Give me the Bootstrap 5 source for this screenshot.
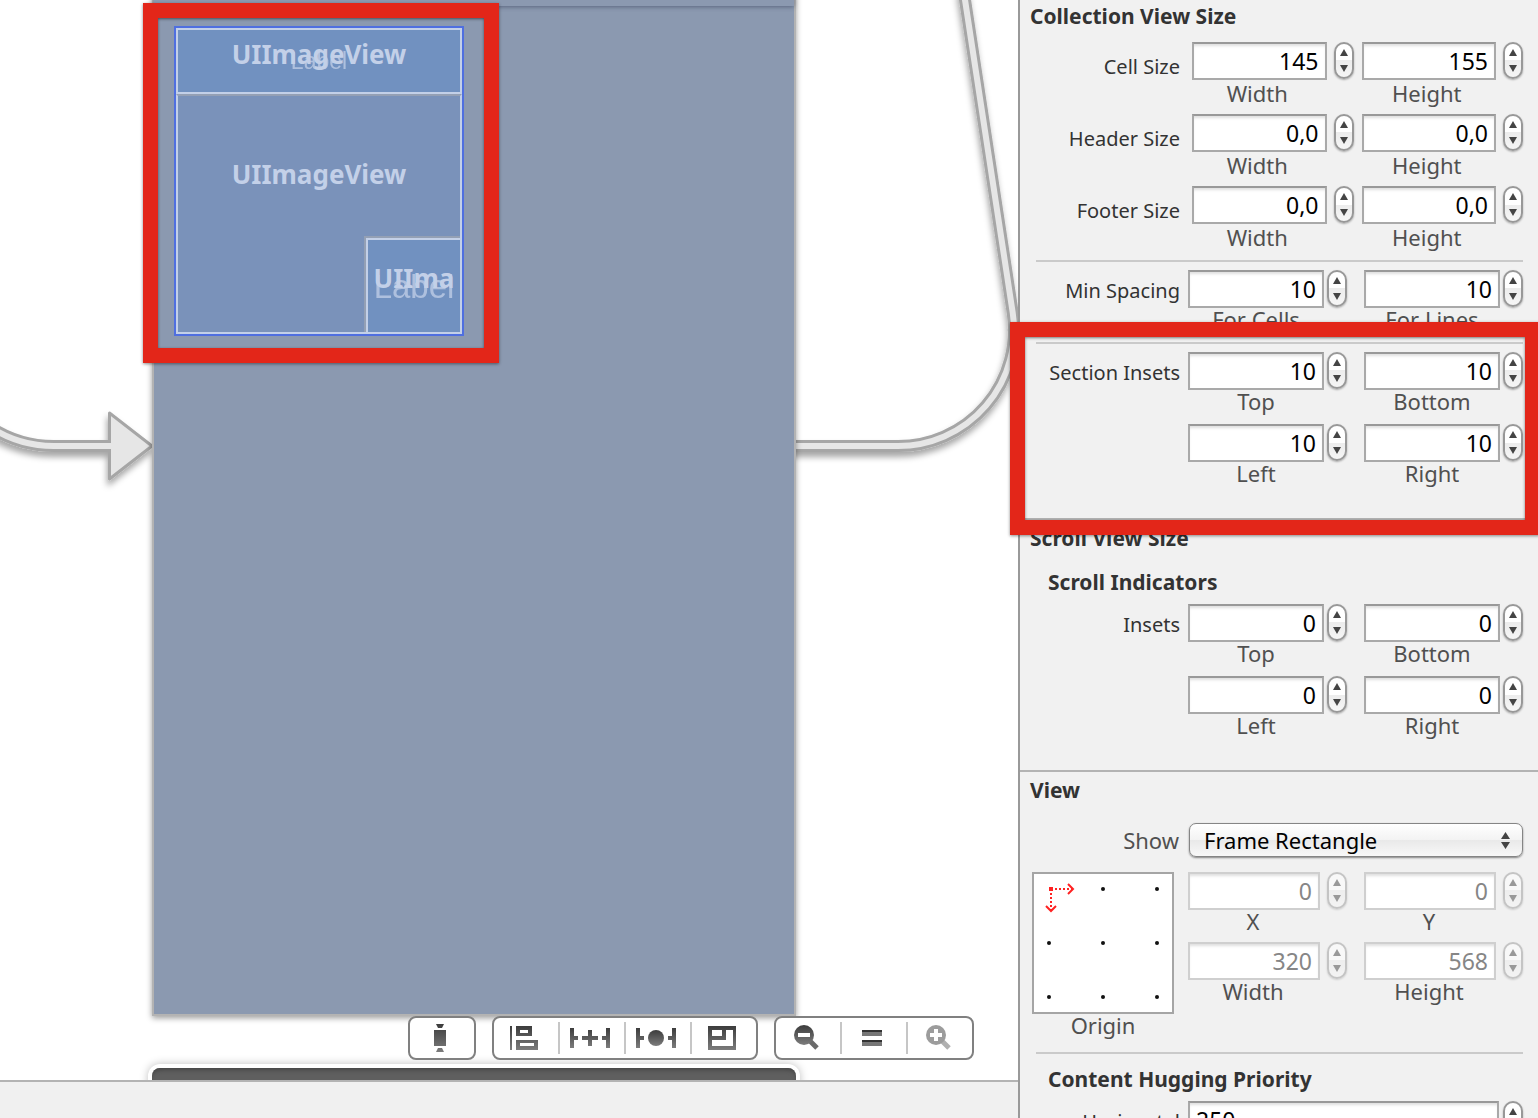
<!DOCTYPE html>
<html lang="en">
<head>
<meta charset="utf-8">
<meta name="viewport" content="width=device-width, initial-scale=1">
<title>Storyboard – Collection View Size</title>
<link href="https://cdn.jsdelivr.net/npm/bootstrap@5.3.0/dist/css/bootstrap.min.css" rel="stylesheet">
<style>
body{font-family:"Noto Sans","Open Sans",sans-serif;font-size:22px;line-height:22px;color:#333;background:#fff}
/* canvas */
.stage{background:#fff;min-width:0}
.wires{left:0;top:0;pointer-events:none}
.scene{left:152px;top:-8px;bottom:64px;width:644px;background:#8b99b0;border:2px solid #b3b3b3;box-shadow:0 2px 6px rgba(0,0,0,.4)}
.scene-bar{height:12px;box-shadow:0 1px 4px rgba(50,60,85,.55)}
.next-scene{left:152px;bottom:-30px;width:644px;height:42px;background:#5f5f5f;border-radius:8px;box-shadow:inset 0 4px 4px -2px #444,0 0 0 4px #fff,0 0 8px 4px rgba(0,0,0,.25)}
.red-frame{border:15px solid #e32619;box-shadow:0 1px 3px rgba(0,0,0,.45),inset 0 1px 3px rgba(0,0,0,.5);pointer-events:none}
.frame-cell{left:143px;top:3px;width:356px;height:360px}
.cell-box{left:174px;top:26px;width:290px;height:310px;border:2px solid #4f6fe0;background:#7a92ba}
.img-view{border:2px solid #c3d0e8;color:#c3d0e8;font-weight:700;font-size:26px;line-height:36px;overflow:hidden}
.img-head{height:66px;background:#7191c0;padding-top:6px}
.img-body{border-top:2px solid #94a0b5;padding-top:60px}
.img-badge{right:0;bottom:0;width:96px;height:96px;background:#7191c0;box-shadow:-2px -2px 0 #94a0b5;padding-top:20px}
.ghost{left:0;right:0;font-family:"Liberation Sans",Arial,sans-serif;font-weight:400;opacity:.75;text-align:center}
.ghost-s{top:13px;font-size:23px}
.ghost-l{top:29px;font-size:33px}
/* floating tool bar */
.tools{right:44px;bottom:20px;gap:16px}
.tool-group{border:2px solid #808080;border-radius:8px;background:#fff}
.tool{width:64px;height:40px;border:0;padding:0;background:none;display:block}
.split{width:2px;height:32px;background:#c6c6c6}
.foot{height:38px;background:#f0f0f0;border-top:2px solid #b3b3b3}
/* inspector */
.inspector{width:520px;background:#f1f1f1;border-left:2px solid #999}
.panel{padding:5px 15px 22px 0;border-bottom:2px solid #b3b3b3}
.panel-first{margin-top:-2px}
.head{font-size:21px;line-height:26px;font-weight:700;margin:0 0 18px;padding-left:10px}
.subhead{padding-left:28px;margin-bottom:9px}
.panel-first .head{margin-bottom:13px}
.rule{height:2px;margin:0 0 8px 16px;background:#cacaca}
.rule-first{margin-top:2px}
.tag{flex:none;width:160px;text-align:right;font-size:20px;line-height:38px;padding-top:2px}
.line{gap:8px;height:72px}
.pairs{flex:1 1 0;min-width:0;gap:17px}
.wide{gap:12px}
.wide .tag{padding-top:6px}
.wide .pairs{gap:8px}
.off{height:70px}
.cellf{flex:1 1 0;min-width:0}
.ctl{gap:3px}
.wide .ctl,.off .ctl{gap:7px}
.num{flex:1 1 0;min-width:0;height:38px;border:2px solid #a9a9a9;border-top-color:#999;border-radius:0;background:#fff;color:#000;text-align:right;font-size:23px;line-height:30px;padding:2px 6px;box-shadow:inset 0 3px 3px -1px rgba(0,0,0,.13)}
.num:disabled{border-color:#cfcfcf;color:#868686}
.cap{display:block;text-align:center;color:#505050;margin-right:23px}
.wide .cap{margin-top:2px;margin-right:31px}
.off .cap{margin-right:29px}
.spin{flex:none;width:20px;height:37px;border:2px solid #989898;border-radius:10px;background:linear-gradient(#fff 50%,#ececec 50%,#f6f6f6);box-shadow:0 1px 2px rgba(0,0,0,.3);overflow:hidden}
.spin button{flex:1;border:0;padding:0;background:none;line-height:0}
.off .spin{opacity:.5}
.show-tag{width:159px;text-align:right;color:#505050}
.popup{height:34px;width:100%;border:1px solid #858585;border-radius:7px;background:linear-gradient(#fff,#f3f3f3 50%,#e9e9e9 51%,#f8f8f8);box-shadow:0 1px 2px rgba(0,0,0,.45);appearance:none;color:#000;font-size:22px;line-height:30px;padding:0 14px}
.popup-mark{right:13px;top:9px;pointer-events:none}
.show-row{gap:10px;margin:20px 0 15px}
.origin{width:142px;margin:0 14px 0 12px}
.origin-box{height:142px;background:#fff;border:2px solid #a5a5a5}
.frame-insets{left:-10px;right:-2px;top:322px;height:213px}
</style>
<script src="https://cdn.jsdelivr.net/npm/bootstrap@5.3.0/dist/js/bootstrap.bundle.min.js"></script>
</head>
<body>
<svg width="0" height="0" class="position-absolute" aria-hidden="true">
<defs>
<linearGradient id="ink" x1="0" y1="0" x2="0" y2="1"><stop offset="0" stop-color="#3c3c3c"/><stop offset="1" stop-color="#7c7c7c"/></linearGradient>
<symbol id="up" viewBox="0 0 8 7"><path d="M4 0 8 7H0z" fill="#444"/></symbol>
<symbol id="down" viewBox="0 0 8 7"><path d="M0 0H8L4 7z" fill="#444"/></symbol>
</defs>
</svg>
<div class="d-flex vh-100 overflow-hidden">
<main class="d-flex flex-column flex-grow-1 stage">
  <div class="position-relative flex-grow-1 overflow-hidden">
    <svg class="wires position-absolute" width="1018" height="1080" aria-hidden="true">
      <defs><filter id="sh" x="-10%" y="-10%" width="120%" height="130%"><feDropShadow dx="-1" dy="5" stdDeviation="3" flood-opacity=".35"/></filter></defs>
      <g filter="url(#sh)" fill="none">
        <path d="M-10 427C10 440 30 446 54 446H112" stroke="#a6a6a6" stroke-width="12"/>
        <path d="M109.500 413 152 446 109.500 479z" fill="#e6e6e6" stroke="#a6a6a6" stroke-width="3" stroke-linejoin="round"/>
        <path d="M-10 427C10 440 30 446 54 446H112" stroke="#e6e6e6" stroke-width="6"/>
      </g>
      <g filter="url(#sh)" fill="none">
        <path d="M790 446H898A116 116 0 0 0 1012.700 312.600L963.500 -10" stroke="#a6a6a6" stroke-width="12"/>
        <path d="M790 446H898A116 116 0 0 0 1012.700 312.600L963.500 -10" stroke="#e6e6e6" stroke-width="6"/>
      </g>
    </svg>
    <div class="scene position-absolute"><div class="scene-bar"></div></div>
    <div class="next-scene position-absolute"></div>
    <div class="cell-box position-absolute d-flex flex-column">
      <div class="img-view img-head position-relative text-center"><span class="ghost ghost-s position-absolute">Label</span>UIImageView</div>
      <div class="img-view img-body flex-grow-1 text-center">UIImageView</div>
      <div class="img-view img-badge position-absolute text-center"><span class="ghost ghost-l position-absolute">Label</span>UIIma</div>
    </div>
    <div class="red-frame frame-cell position-absolute"></div>
    <div class="tools position-absolute d-flex">
      <div class="tool-group d-flex align-items-center">
        <button class="tool" type="button" aria-label="Form factor"><svg width="64" height="40" fill="url(#ink)"><path d="M26 6h8l-2 4h-4zM24 12h12v16H24zM28 30h4l2 4h-8z"/></svg></button>
      </div>
      <div class="tool-group d-flex align-items-center">
        <button class="tool" type="button" aria-label="Align"><svg width="64" height="40" fill="url(#ink)"><path fill-rule="evenodd" d="M16 8h2v24h-2zM22 8h16v10H22zM26 12v3h8v-3zM22 22h22v10H22zM26 25v3h14v-3z"/></svg></button>
        <span class="split"></span>
        <button class="tool" type="button" aria-label="Pin"><svg width="64" height="40" fill="url(#ink)"><path d="M10 10h4v8h4v4h-4v8h-4zM28 12h4v6h6v4h-6v6h-4v-6h-6v-4h6zM50 10v20h-4v-8h-4v-4h4v-8z"/></svg></button>
        <span class="split"></span>
        <button class="tool" type="button" aria-label="Resolve issues"><svg width="64" height="40" fill="url(#ink)"><path d="M10 10h4v8h4v4h-4v8h-4zM50 10v20h-4v-8h-4v-4h4v-8z"/><circle cx="30" cy="20" r="8"/></svg></button>
        <span class="split"></span>
        <button class="tool" type="button" aria-label="Resizing behavior"><svg width="64" height="40" fill="url(#ink)"><path fill-rule="evenodd" d="M16 8h28v24H16zM20 12v6h10v-6zM34 12v10H20v6h21V12z"/></svg></button>
      </div>
      <div class="tool-group d-flex align-items-center">
        <button class="tool" type="button" aria-label="Zoom out"><svg width="64" height="40"><path d="M34 23 41 30" stroke="#6a6a6a" stroke-width="5"/><circle cx="28" cy="17" r="10" fill="url(#ink)"/><path d="M22 15h12v4H22z" fill="#fff"/></svg></button>
        <span class="split"></span>
        <button class="tool" type="button" aria-label="Actual size"><svg width="64" height="40"><path d="M20 12h20v6H20zM20 22h20v6H20z" fill="#777"/><path d="M20 12h20v2H20zM20 22h20v2H20z" fill="#333"/></svg></button>
        <span class="split"></span>
        <button class="tool" type="button" aria-label="Zoom in"><svg width="64" height="40"><path d="M34 23 41 30" stroke="#b0b0b0" stroke-width="5"/><circle cx="28" cy="17" r="10" fill="#9c9c9c"/><path d="M26 11h4v4h4v4h-4v4h-4v-4h-4v-4h4z" fill="#fff"/></svg></button>
      </div>
    </div>
  </div>
  <div class="foot flex-shrink-0"></div>
</main>

<aside class="inspector flex-shrink-0 position-relative">
  <section class="panel panel-first">
    <h2 class="head">Collection View Size</h2>
    <div class="line wide d-flex" role="group" aria-label="Cell Size"><span class="tag">Cell Size</span>
      <div class="pairs d-flex">
        <div class="cellf"><div class="ctl d-flex"><input class="num" id="cw" value="145"><span class="spin d-flex flex-column"><button type="button" aria-label="Increase"><svg width="8" height="7"><use href="#up"/></svg></button><button type="button" aria-label="Decrease"><svg width="8" height="7"><use href="#down"/></svg></button></span></div><label class="cap" for="cw">Width</label></div>
        <div class="cellf"><div class="ctl d-flex"><input class="num" id="ch" value="155"><span class="spin d-flex flex-column"><button type="button" aria-label="Increase"><svg width="8" height="7"><use href="#up"/></svg></button><button type="button" aria-label="Decrease"><svg width="8" height="7"><use href="#down"/></svg></button></span></div><label class="cap" for="ch">Height</label></div>
      </div></div>
    <div class="line wide d-flex" role="group" aria-label="Header Size"><span class="tag">Header Size</span>
      <div class="pairs d-flex">
        <div class="cellf"><div class="ctl d-flex"><input class="num" id="hw" value="0,0"><span class="spin d-flex flex-column"><button type="button" aria-label="Increase"><svg width="8" height="7"><use href="#up"/></svg></button><button type="button" aria-label="Decrease"><svg width="8" height="7"><use href="#down"/></svg></button></span></div><label class="cap" for="hw">Width</label></div>
        <div class="cellf"><div class="ctl d-flex"><input class="num" id="hh" value="0,0"><span class="spin d-flex flex-column"><button type="button" aria-label="Increase"><svg width="8" height="7"><use href="#up"/></svg></button><button type="button" aria-label="Decrease"><svg width="8" height="7"><use href="#down"/></svg></button></span></div><label class="cap" for="hh">Height</label></div>
      </div></div>
    <div class="line wide d-flex" role="group" aria-label="Footer Size"><span class="tag">Footer Size</span>
      <div class="pairs d-flex">
        <div class="cellf"><div class="ctl d-flex"><input class="num" id="fw" value="0,0"><span class="spin d-flex flex-column"><button type="button" aria-label="Increase"><svg width="8" height="7"><use href="#up"/></svg></button><button type="button" aria-label="Decrease"><svg width="8" height="7"><use href="#down"/></svg></button></span></div><label class="cap" for="fw">Width</label></div>
        <div class="cellf"><div class="ctl d-flex"><input class="num" id="fh" value="0,0"><span class="spin d-flex flex-column"><button type="button" aria-label="Increase"><svg width="8" height="7"><use href="#up"/></svg></button><button type="button" aria-label="Decrease"><svg width="8" height="7"><use href="#down"/></svg></button></span></div><label class="cap" for="fh">Height</label></div>
      </div></div>
    <div class="rule rule-first"></div>
    <div class="line d-flex" role="group" aria-label="Min Spacing"><span class="tag">Min Spacing</span>
      <div class="pairs d-flex">
        <div class="cellf"><div class="ctl d-flex"><input class="num" id="mc" value="10"><span class="spin d-flex flex-column"><button type="button" aria-label="Increase"><svg width="8" height="7"><use href="#up"/></svg></button><button type="button" aria-label="Decrease"><svg width="8" height="7"><use href="#down"/></svg></button></span></div><label class="cap" for="mc">For Cells</label></div>
        <div class="cellf"><div class="ctl d-flex"><input class="num" id="ml" value="10"><span class="spin d-flex flex-column"><button type="button" aria-label="Increase"><svg width="8" height="7"><use href="#up"/></svg></button><button type="button" aria-label="Decrease"><svg width="8" height="7"><use href="#down"/></svg></button></span></div><label class="cap" for="ml">For Lines</label></div>
      </div></div>
    <div class="rule"></div>
    <div class="line d-flex" role="group" aria-label="Section Insets"><span class="tag">Section Insets</span>
      <div class="pairs d-flex">
        <div class="cellf"><div class="ctl d-flex"><input class="num" id="st" value="10"><span class="spin d-flex flex-column"><button type="button" aria-label="Increase"><svg width="8" height="7"><use href="#up"/></svg></button><button type="button" aria-label="Decrease"><svg width="8" height="7"><use href="#down"/></svg></button></span></div><label class="cap" for="st">Top</label></div>
        <div class="cellf"><div class="ctl d-flex"><input class="num" id="sb" value="10"><span class="spin d-flex flex-column"><button type="button" aria-label="Increase"><svg width="8" height="7"><use href="#up"/></svg></button><button type="button" aria-label="Decrease"><svg width="8" height="7"><use href="#down"/></svg></button></span></div><label class="cap" for="sb">Bottom</label></div>
      </div></div>
    <div class="line d-flex"><span class="tag"></span>
      <div class="pairs d-flex">
        <div class="cellf"><div class="ctl d-flex"><input class="num" id="sl" value="10"><span class="spin d-flex flex-column"><button type="button" aria-label="Increase"><svg width="8" height="7"><use href="#up"/></svg></button><button type="button" aria-label="Decrease"><svg width="8" height="7"><use href="#down"/></svg></button></span></div><label class="cap" for="sl">Left</label></div>
        <div class="cellf"><div class="ctl d-flex"><input class="num" id="sr" value="10"><span class="spin d-flex flex-column"><button type="button" aria-label="Increase"><svg width="8" height="7"><use href="#up"/></svg></button><button type="button" aria-label="Decrease"><svg width="8" height="7"><use href="#down"/></svg></button></span></div><label class="cap" for="sr">Right</label></div>
      </div></div>
  </section>

  <section class="panel">
    <h2 class="head">Scroll View Size</h2>
    <h3 class="head subhead">Scroll Indicators</h3>
    <div class="line d-flex" role="group" aria-label="Insets"><span class="tag">Insets</span>
      <div class="pairs d-flex">
        <div class="cellf"><div class="ctl d-flex"><input class="num" id="it" value="0"><span class="spin d-flex flex-column"><button type="button" aria-label="Increase"><svg width="8" height="7"><use href="#up"/></svg></button><button type="button" aria-label="Decrease"><svg width="8" height="7"><use href="#down"/></svg></button></span></div><label class="cap" for="it">Top</label></div>
        <div class="cellf"><div class="ctl d-flex"><input class="num" id="ib" value="0"><span class="spin d-flex flex-column"><button type="button" aria-label="Increase"><svg width="8" height="7"><use href="#up"/></svg></button><button type="button" aria-label="Decrease"><svg width="8" height="7"><use href="#down"/></svg></button></span></div><label class="cap" for="ib">Bottom</label></div>
      </div></div>
    <div class="line d-flex"><span class="tag"></span>
      <div class="pairs d-flex">
        <div class="cellf"><div class="ctl d-flex"><input class="num" id="il" value="0"><span class="spin d-flex flex-column"><button type="button" aria-label="Increase"><svg width="8" height="7"><use href="#up"/></svg></button><button type="button" aria-label="Decrease"><svg width="8" height="7"><use href="#down"/></svg></button></span></div><label class="cap" for="il">Left</label></div>
        <div class="cellf"><div class="ctl d-flex"><input class="num" id="ir" value="0"><span class="spin d-flex flex-column"><button type="button" aria-label="Increase"><svg width="8" height="7"><use href="#up"/></svg></button><button type="button" aria-label="Decrease"><svg width="8" height="7"><use href="#down"/></svg></button></span></div><label class="cap" for="ir">Right</label></div>
      </div></div>
  </section>

  <section class="panel border-0">
    <h2 class="head mb-0">View</h2>
    <div class="show-row d-flex align-items-center">
      <label class="show-tag" for="show">Show</label>
      <div class="position-relative flex-grow-1">
        <select class="popup d-block" id="show"><option>Frame Rectangle</option><option>Layout Rectangle</option></select>
        <svg class="popup-mark position-absolute" width="9" height="17" aria-hidden="true"><path d="M4.500 0 9 7H0zM0 10h9L4.500 17z" fill="#444"/></svg>
      </div>
    </div>
    <div class="d-flex mb-3">
      <div class="origin flex-shrink-0">
        <div class="origin-box"><svg class="d-block" width="138" height="138" role="img" aria-label="Origin at top left">
          <g fill="#111"><circle cx="69" cy="15" r="2"/><circle cx="123" cy="15" r="2"/><circle cx="15" cy="69" r="2"/><circle cx="69" cy="69" r="2"/><circle cx="123" cy="69" r="2"/><circle cx="15" cy="123" r="2"/><circle cx="69" cy="123" r="2"/><circle cx="123" cy="123" r="2"/></g>
          <rect x="15" y="13" width="4" height="4" fill="#f22"/>
          <path d="M21 15H38M17 19V36" stroke="#f22" stroke-width="2" stroke-dasharray="2 2"/>
          <path d="M34 10 39 15 34 20M12 32 17 37 22 32" fill="none" stroke="#f22" stroke-width="2"/></svg></div>
        <div class="cap me-0">Origin</div>
      </div>
      <div class="cellf">
        <div class="line off d-flex"><div class="pairs d-flex">
          <div class="cellf"><div class="ctl d-flex"><input class="num" id="vx" value="0" disabled><span class="spin d-flex flex-column"><button type="button" disabled aria-label="Increase"><svg width="8" height="7"><use href="#up"/></svg></button><button type="button" disabled aria-label="Decrease"><svg width="8" height="7"><use href="#down"/></svg></button></span></div><label class="cap" for="vx">X</label></div>
          <div class="cellf"><div class="ctl d-flex"><input class="num" id="vy" value="0" disabled><span class="spin d-flex flex-column"><button type="button" disabled aria-label="Increase"><svg width="8" height="7"><use href="#up"/></svg></button><button type="button" disabled aria-label="Decrease"><svg width="8" height="7"><use href="#down"/></svg></button></span></div><label class="cap" for="vy">Y</label></div>
        </div></div>
        <div class="line off d-flex"><div class="pairs d-flex">
          <div class="cellf"><div class="ctl d-flex"><input class="num" id="vw" value="320" disabled><span class="spin d-flex flex-column"><button type="button" disabled aria-label="Increase"><svg width="8" height="7"><use href="#up"/></svg></button><button type="button" disabled aria-label="Decrease"><svg width="8" height="7"><use href="#down"/></svg></button></span></div><label class="cap" for="vw">Width</label></div>
          <div class="cellf"><div class="ctl d-flex"><input class="num" id="vh" value="568" disabled><span class="spin d-flex flex-column"><button type="button" disabled aria-label="Increase"><svg width="8" height="7"><use href="#up"/></svg></button><button type="button" disabled aria-label="Decrease"><svg width="8" height="7"><use href="#down"/></svg></button></span></div><label class="cap" for="vh">Height</label></div>
        </div></div>
      </div>
    </div>
    <div class="rule"></div>
    <h3 class="head subhead pt-1">Content Hugging Priority</h3>
    <div class="d-flex gap-2">
      <label class="tag" for="hug">Horizontal</label>
      <div class="pairs d-flex gap-1"><input class="num text-start" id="hug" value="250"><span class="spin d-flex flex-column"><button type="button" aria-label="Increase"><svg width="8" height="7"><use href="#up"/></svg></button><button type="button" aria-label="Decrease"><svg width="8" height="7"><use href="#down"/></svg></button></span></div>
    </div>
  </section>
  <div class="red-frame frame-insets position-absolute"></div>
</aside>
</div>
</body>
</html>
